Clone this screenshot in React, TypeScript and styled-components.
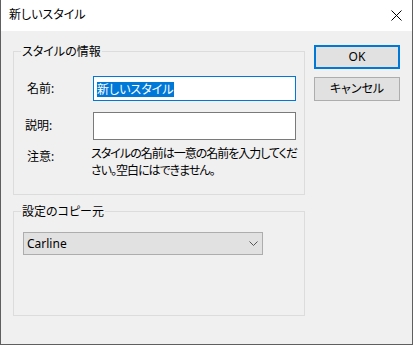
import React from "react";
import styled, { createGlobalStyle } from "styled-components";

const Global = createGlobalStyle`
  html, body { margin: 0; padding: 0; background: #3a3a3a; }
  * { box-sizing: border-box; }
  body {
    font-family: "Segoe UI", "Noto Sans", "Noto Sans CJK JP", sans-serif;
    font-size: 12px;
    color: #000;
    font-feature-settings: "palt" 1;
  }
`;

const Window = styled.div`
  width: 413px;
  height: 345px;
  display: flex;
  flex-direction: column;
  border: 1px solid #5f5f5f;
  border-top: none;
  background: #f0f0f0;
  overflow: hidden;
`;

const TitleBar = styled.div`
  height: 31px;
  flex: none;
  background: #fff;
  display: flex;
  align-items: center;
  justify-content: space-between;
  padding: 0 10px 0 8px;
`;

const Title = styled.span`
  font-size: 12px;
  line-height: 16px;
  margin-top: -1px;
`;

const Body = styled.div`
  flex: 1;
  display: flex;
  padding: 13px 0 0 12px;
  gap: 9px;
`;

const LeftColumn = styled.div`
  width: 292px;
  display: flex;
  flex-direction: column;
  gap: 9px;
`;

const Group = styled.fieldset<{ $h: number }>`
  margin: 0;
  padding: 0;
  min-width: 0;
  height: ${(p) => p.$h}px;
  border: 1px solid #dcdcdc;
`;

const Legend = styled.legend`
  margin-left: 7px;
  padding: 0 1px;
  font-size: 12px;
  line-height: 15px;
`;

const InfoGrid = styled.div`
  display: grid;
  grid-template-columns: 67px 203px;
  padding: 17px 0 0 12px;
  row-gap: 11px;
  align-items: center;
`;

const Label = styled.span<{ $dx?: number; $dy?: number }>`
  font-size: 12px;
  line-height: 16px;
  margin-left: ${(p) => p.$dx ?? 0}px;
  margin-top: ${(p) => p.$dy ?? 0}px;
  align-self: ${(p) => (p.$dy ? "start" : "center")};
`;

const TextBox = styled.div<{ $h: number; $focused?: boolean }>`
  height: ${(p) => p.$h}px;
  background: #fff;
  border: 1px solid ${(p) => (p.$focused ? "#0078d7" : "#7a7a7a")};
  display: flex;
  align-items: center;
  padding-left: 3px;
`;

const Selected = styled.span`
  background: #0078d7;
  color: #fff;
  font-size: 12px;
  line-height: 15px;
  margin-top: 1px;
`;

const Note = styled.div`
  width: 212px;
  margin: -6px 0 0 -2px;
  font-size: 12px;
  line-height: 17px;
  letter-spacing: -1px;
  align-self: start;
`;

const CopyBody = styled.div`
  padding: 13px 0 0 9px;
`;

const Select = styled.div`
  width: 240px;
  height: 23px;
  background: #e1e1e1;
  border: 1px solid #adadad;
  display: flex;
  align-items: center;
  justify-content: space-between;
  padding: 0 4px 0 3px;
`;

const SelectText = styled.span`
  font-family: "Noto Sans", sans-serif;
  font-size: 12px;
  line-height: 16px;
`;

const RightColumn = styled.div`
  width: 86px;
  display: flex;
  flex-direction: column;
  gap: 8px;
  padding-top: 1px;
`;

const Button = styled.div<{ $default?: boolean }>`
  height: 24px;
  background: #e1e1e1;
  border: ${(p) => (p.$default ? "2px solid #0078d7" : "1px solid #adadad")};
  display: flex;
  align-items: center;
  justify-content: center;
  font-size: 12px;
  line-height: 16px;
`;

const Close = () => (
  <svg width="11" height="11" viewBox="0 0 11 11">
    <path d="M0.5 0.5 L10.5 10.5 M10.5 0.5 L0.5 10.5" stroke="#000" strokeWidth="1" />
  </svg>
);

const Chevron = () => (
  <svg width="9" height="5" viewBox="0 0 9 5">
    <path d="M0.5 0.5 L4.5 4.5 L8.5 0.5" stroke="#555" strokeWidth="1" fill="none" />
  </svg>
);

export default function App() {
  return (
    <>
      <Global />
      <Window>
        <TitleBar>
          <Title>新しいスタイル</Title>
          <Close />
        </TitleBar>
        <Body>
          <LeftColumn>
            <Group $h={151}>
              <Legend>スタイルの情報</Legend>
              <InfoGrid>
                <Label $dx={1}>名前:</Label>
                <TextBox $h={25} $focused>
                  <Selected>新しいスタイル</Selected>
                </TextBox>
                <Label $dx={-1}>説明:</Label>
                <TextBox $h={28} />
                <Label $dx={1} $dy={-2}>注意:</Label>
                <Note>
                  スタイルの名前は一意の名前を入力してください。空白にはできません。
                </Note>
              </InfoGrid>
            </Group>
            <Group $h={112}>
              <Legend>設定のコピー元</Legend>
              <CopyBody>
                <Select>
                  <SelectText>Carline</SelectText>
                  <Chevron />
                </Select>
              </CopyBody>
            </Group>
          </LeftColumn>
          <RightColumn>
            <Button $default>OK</Button>
            <Button>キャンセル</Button>
          </RightColumn>
        </Body>
      </Window>
    </>
  );
}
